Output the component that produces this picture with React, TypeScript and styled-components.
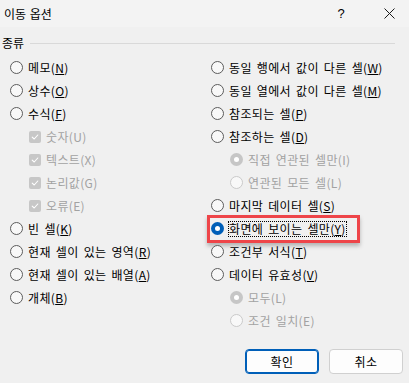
import styled, { createGlobalStyle, css } from 'styled-components';

const GlobalStyle = createGlobalStyle`
  html, body {
    margin: 0;
    padding: 0;
    background: #f0f0f0;
  }
  body {
    font-family: "Noto Sans CJK KR", "Noto Sans", sans-serif;
    font-size: 12px;
    color: #000;
  }
`;

const Dialog = styled.div`
  width: 409px;
  height: 383px;
  background: #f0f0f0;
  display: flex;
  flex-direction: column;
  overflow: hidden;
`;

const TitleBar = styled.div`
  height: 27px;
  background: #f3f3f3;
  display: flex;
  align-items: center;
  padding-left: 4px;
  line-height: 1;
`;

const Title = styled.div`
  flex: 1;
  font-size: 12px;
  word-spacing: 1px;
`;

const HelpMark = styled.div`
  width: 12px;
  margin-right: 36px;
  font-family: "Liberation Sans", sans-serif;
  font-size: 13px;
  text-align: center;
`;

const CloseButton = styled.div`
  width: 12px;
  margin-right: 14px;
  display: flex;
  justify-content: center;
`;

const GroupHeader = styled.div`
  height: 29px;
  padding: 3px 14px 0 2px;
  box-sizing: border-box;
  display: flex;
  align-items: center;
  gap: 6px;
  line-height: 1;
`;

const GroupLine = styled.div`
  flex: 1;
  height: 1px;
  background: #d9d9d9;
`;

const Columns = styled.div`
  display: grid;
  grid-template-columns: 201px 1fr;
  padding-left: 10px;
`;

const Column = styled.div`
  display: flex;
  flex-direction: column;
`;

const Row = styled.div<{ $indent?: boolean; $highlight?: boolean }>`
  height: 23px;
  display: flex;
  align-items: center;
  gap: 5px;
  padding-left: ${(p) => (p.$indent ? '19px' : '0')};
  position: relative;
  ${(p) =>
    p.$highlight &&
    css`
      &::after {
        content: '';
        position: absolute;
        left: -4px;
        top: -2px;
        width: 153px;
        height: 28px;
        box-sizing: border-box;
        border: 3px solid #ee4549;
        box-shadow: 0 3px 4px rgba(0, 0, 0, 0.25);
        pointer-events: none;
      }
    `}
`;

const Label = styled.span<{ $disabled?: boolean; $focus?: boolean }>`
  line-height: 14px;
  white-space: nowrap;
  letter-spacing: 0.35px;
  word-spacing: 2px;
  color: ${(p) => (p.$disabled ? '#a2a2a2' : '#000')};
  ${(p) =>
    p.$focus &&
    css`
      outline: 1px dotted #000;
      outline-offset: 0px;
    `}
  u {
    text-underline-offset: 1px;
  }
`;

const Radio = styled.span<{ $checked?: boolean; $disabled?: boolean }>`
  width: 13px;
  height: 13px;
  border-radius: 50%;
  box-sizing: border-box;
  flex: none;
  display: flex;
  align-items: center;
  justify-content: center;
  ${(p) =>
    p.$checked
      ? css`
          background: ${p.$disabled ? '#c6c6c6' : '#005fb8'};
          &::after {
            content: '';
            width: 5px;
            height: 5px;
            border-radius: 50%;
            background: #fff;
          }
        `
      : css`
          background: #f8f8f8;
          border: 1px solid ${p.$disabled ? '#cacaca' : '#5c5c5c'};
        `}
`;

const CheckBox = styled.span`
  width: 12px;
  height: 12px;
  border-radius: 2px;
  background: #c7c7c7;
  flex: none;
  display: flex;
  align-items: center;
  justify-content: center;
`;

const Footer = styled.div`
  margin-top: auto;
  display: flex;
  justify-content: flex-end;
  gap: 10px;
  padding: 0 6px 9px 0;
`;

const Button = styled.button<{ $primary?: boolean }>`
  width: 74px;
  height: 25px;
  box-sizing: border-box;
  border-radius: 4px;
  background: #fdfdfd;
  border: 1px solid ${(p) => (p.$primary ? '#005fb8' : '#d0d0d0')};
  box-shadow: ${(p) => (p.$primary ? 'inset 0 0 0 1px #005fb8' : 'none')};
  font-family: "Noto Sans CJK KR", "Noto Sans", sans-serif;
  font-size: 12px;
  letter-spacing: 0.5px;
  line-height: 1;
  color: #000;
  padding: 0;
`;

type Item = {
  kind: 'radio' | 'check';
  text: string;
  key: string;
  indent?: boolean;
  disabled?: boolean;
  checked?: boolean;
  highlight?: boolean;
};

const left: Item[] = [
  { kind: 'radio', text: '메모', key: 'N' },
  { kind: 'radio', text: '상수', key: 'O' },
  { kind: 'radio', text: '수식', key: 'F' },
  { kind: 'check', text: '숫자', key: 'U', indent: true, disabled: true, checked: true },
  { kind: 'check', text: '텍스트', key: 'X', indent: true, disabled: true, checked: true },
  { kind: 'check', text: '논리값', key: 'G', indent: true, disabled: true, checked: true },
  { kind: 'check', text: '오류', key: 'E', indent: true, disabled: true, checked: true },
  { kind: 'radio', text: '빈 셀', key: 'K' },
  { kind: 'radio', text: '현재 셀이 있는 영역', key: 'R' },
  { kind: 'radio', text: '현재 셀이 있는 배열', key: 'A' },
  { kind: 'radio', text: '개체', key: 'B' },
];

const right: Item[] = [
  { kind: 'radio', text: '동일 행에서 값이 다른 셀', key: 'W' },
  { kind: 'radio', text: '동일 열에서 값이 다른 셀', key: 'M' },
  { kind: 'radio', text: '참조되는 셀', key: 'P' },
  { kind: 'radio', text: '참조하는 셀', key: 'D' },
  { kind: 'radio', text: '직접 연관된 셀만', key: 'I', indent: true, disabled: true, checked: true },
  { kind: 'radio', text: '연관된 모든 셀', key: 'L', indent: true, disabled: true },
  { kind: 'radio', text: '마지막 데이터 셀', key: 'S' },
  { kind: 'radio', text: '화면에 보이는 셀만', key: 'Y', checked: true, highlight: true },
  { kind: 'radio', text: '조건부 서식', key: 'T' },
  { kind: 'radio', text: '데이터 유효성', key: 'V' },
  { kind: 'radio', text: '모두', key: 'L', indent: true, disabled: true, checked: true },
  { kind: 'radio', text: '조건 일치', key: 'E', indent: true, disabled: true },
];

const CheckMark = () => (
  <svg width="8" height="8" viewBox="0 0 8 8">
    <path d="M1.2 4.2 L3.2 6 L6.8 2" fill="none" stroke="#fff" strokeWidth="1.1" strokeLinecap="round" strokeLinejoin="round" />
  </svg>
);

const Option = ({ item }: { item: Item }) => (
  <Row $indent={item.indent} $highlight={item.highlight}>
    {item.kind === 'radio' ? (
      <Radio $checked={item.checked} $disabled={item.disabled} />
    ) : (
      <CheckBox>
        <CheckMark />
      </CheckBox>
    )}
    <Label $disabled={item.disabled} $focus={item.highlight}>
      {item.text}(
      {item.disabled ? item.key : <u>{item.key}</u>})
    </Label>
  </Row>
);

export default function App() {
  return (
    <Dialog>
      <GlobalStyle />
      <TitleBar>
        <Title>이동 옵션</Title>
        <HelpMark>?</HelpMark>
        <CloseButton>
          <svg width="11" height="11" viewBox="0 0 11 11">
            <path d="M0.5 0.5 L10.5 10.5 M10.5 0.5 L0.5 10.5" stroke="#1a1a1a" strokeWidth="1" />
          </svg>
        </CloseButton>
      </TitleBar>
      <GroupHeader>
        <span>종류</span>
        <GroupLine />
      </GroupHeader>
      <Columns>
        <Column>
          {left.map((item, i) => (
            <Option key={i} item={item} />
          ))}
        </Column>
        <Column>
          {right.map((item, i) => (
            <Option key={i} item={item} />
          ))}
        </Column>
      </Columns>
      <Footer>
        <Button $primary>확인</Button>
        <Button>취소</Button>
      </Footer>
    </Dialog>
  );
}
